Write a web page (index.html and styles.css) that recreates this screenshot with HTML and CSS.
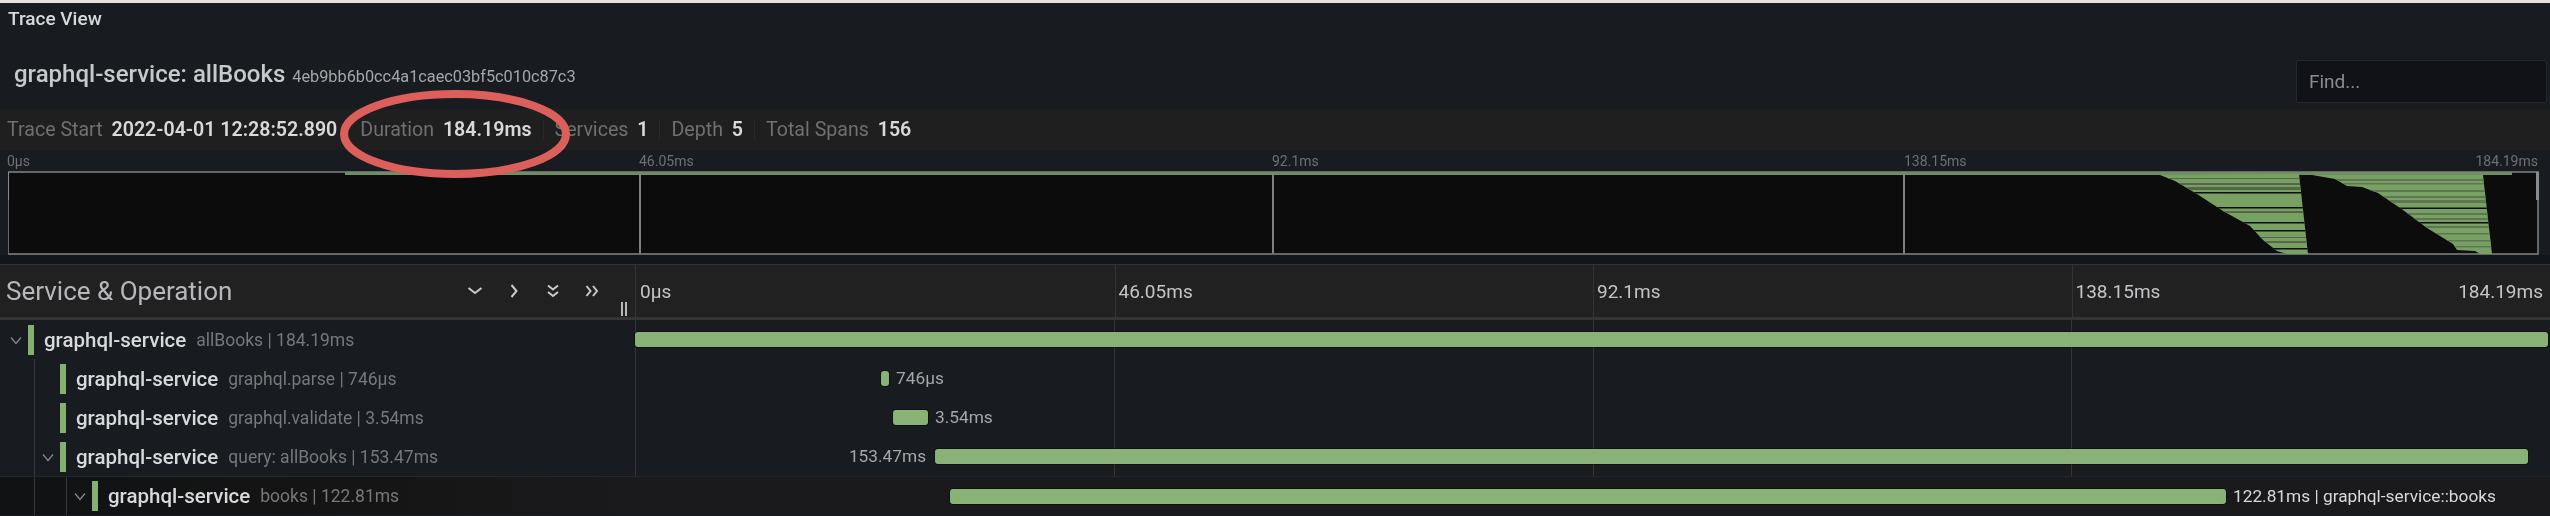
FILE: index.html
```html
<!DOCTYPE html>
<html lang="en">
<head>
<meta charset="utf-8">
<title>Trace View</title>
<link rel="stylesheet" href="styles.css">
</head>
<body>
<div class="app">
  <div class="strip"></div>
  <h2 class="view-title">Trace View</h2>
  <header class="trace-head">
    <h1 class="trace-name">graphql-service: allBooks <small class="trace-id">4eb9bb6b0cc4a1caec03bf5c010c87c3</small></h1>
    <div class="find">Find...</div>
  </header>
  <ul class="stats">
    <li class="stat"><span class="stat-key">Trace Start</span> <b class="stat-val">2022-04-01 12:28:52.890</b></li>
    <li class="stat"><span class="stat-key">Duration</span> <b class="stat-val">184.19ms</b></li>
    <li class="stat"><span class="stat-key">Services</span> <b class="stat-val">1</b></li>
    <li class="stat"><span class="stat-key">Depth</span> <b class="stat-val">5</b></li>
    <li class="stat"><span class="stat-key">Total Spans</span> <b class="stat-val">156</b></li>
  </ul>
  <div class="mini-labels">
    <span class="mini-label">0µs</span>
    <span class="mini-label">46.05ms</span>
    <span class="mini-label">92.1ms</span>
    <span class="mini-label">138.15ms</span>
    <span class="mini-label mini-label-end">184.19ms</span>
  </div>
  <div class="minimap">
    <svg class="mini-svg" width="2534" height="84" viewBox="8 171 2534 84">
      <defs>
        <clipPath id="ribbon-a">
          <polygon points="2160,175 2175,181 2197,194 2223,211 2250,226 2263,240 2277,251 2287,254 2308,254 2299,174"/>
        </clipPath>
        <clipPath id="ribbon-b">
          <polygon points="2312,175 2335,179 2347,186 2362,187 2378,193 2403,210 2427,228 2453,244 2457,250 2475,251 2480,254 2492,254 2483,175"/>
        </clipPath>
      </defs>
      <rect x="8" y="172" width="2531" height="82" fill="#0c0c0d"/>
      <path d="M640 172V254M1273 172V254M1904 172V254" stroke="#a7a7a7" stroke-width="1.5"/>
      <rect x="8" y="172" width="2530" height="82" fill="none" stroke="#6f7170" stroke-width="1.8"/>
      <rect x="345" y="172" width="2167" height="3" fill="#6f8f62"/>
      <g clip-path="url(#ribbon-a)">
        <rect x="2150" y="172" width="170" height="84" fill="#78a063"/>
        <g fill="#55664b">
          <rect x="2150" y="178" width="170" height="1"/>
          <rect x="2150" y="183" width="170" height="2"/>
          <rect x="2150" y="187" width="170" height="3"/>
          <rect x="2150" y="211" width="170" height="2"/>
          <rect x="2150" y="237" width="170" height="1"/>
          <rect x="2150" y="241" width="170" height="2"/>
        </g>
        <g fill="#0c0c0d">
          <rect x="2150" y="192" width="170" height="1.500"/>
          <rect x="2150" y="207" width="170" height="1.500"/>
          <rect x="2150" y="222" width="170" height="1.500"/>
          <rect x="2150" y="230" width="170" height="1.500"/>
          <rect x="2150" y="248" width="170" height="1.500"/>
        </g>
      </g>
      <g clip-path="url(#ribbon-b)">
        <rect x="2310" y="172" width="190" height="84" fill="#78a063"/>
        <g fill="#5f7655">
          <rect x="2310" y="179" width="190" height="2"/>
          <rect x="2310" y="183" width="190" height="1.500"/>
          <rect x="2310" y="190" width="190" height="2"/>
          <rect x="2310" y="196" width="190" height="2"/>
          <rect x="2310" y="200" width="190" height="3"/>
          <rect x="2310" y="213" width="190" height="2"/>
          <rect x="2310" y="218" width="190" height="2"/>
          <rect x="2310" y="226" width="190" height="2"/>
          <rect x="2310" y="233" width="190" height="1.500"/>
          <rect x="2310" y="240" width="190" height="1.500"/>
          <rect x="2310" y="246" width="190" height="1.500"/>
        </g>
        <g fill="#0c0c0d">
          <rect x="2310" y="207.500" width="190" height="1.500"/>
          <rect x="2310" y="222" width="190" height="1.500"/>
        </g>
      </g>
      <rect x="7" y="172" width="2" height="28" fill="#8a8a8a"/>
      <rect x="2536" y="172" width="3" height="28" fill="#8a8a8a"/>
    </svg>
  </div>
  <div class="gap"></div>
  <div class="table-head">
    <div class="left-head">
      <span class="col-title">Service &amp; Operation</span>
      <div class="head-icons">
        <svg class="head-icon" viewBox="0 0 16 16"><path d="M1.500 5l6.500 5 6.500-5"/></svg>
        <svg class="head-icon" viewBox="0 0 16 16"><path d="M5.500 2l5 6-5 6"/></svg>
        <svg class="head-icon" viewBox="0 0 16 16"><path d="M3 2.500l5 4 5-4M3 9l5 4 5-4"/></svg>
        <svg class="head-icon" viewBox="0 0 16 16"><path d="M2.500 3l4 5-4 5M9 3l4 5-4 5"/></svg>
      </div>
      <span class="drag-handle"></span>
    </div>
    <div class="right-head">
      <span class="tick-label">0µs</span>
      <span class="tick-label">46.05ms</span>
      <span class="tick-label">92.1ms</span>
      <span class="tick-label">138.15ms</span>
      <span class="tick-end">184.19ms</span>
    </div>
  </div>
  <div class="rows">
    <div class="row">
      <div class="row-name depth-0">
        <svg class="toggle" viewBox="0 0 16 16"><path d="M3 5.500l5 6 5-6"/></svg>
        <span class="swatch"></span><span class="service">graphql-service</span><span class="op">allBooks | 184.19ms</span>
      </div>
      <div class="row-track"><div class="bar bar-root" style="margin-left:0%;width:99.9%"></div></div>
    </div>
    <div class="row">
      <div class="row-name depth-1">
        <span class="toggle-empty"></span>
        <span class="swatch"></span><span class="service">graphql-service</span><span class="op">graphql.parse | 746µs</span>
      </div>
      <div class="row-track"><div class="bar" style="margin-left:12.85%;width:0.42%"><span class="bar-label">746µs</span></div></div>
    </div>
    <div class="row">
      <div class="row-name depth-1">
        <span class="toggle-empty"></span>
        <span class="swatch"></span><span class="service">graphql-service</span><span class="op">graphql.validate | 3.54ms</span>
      </div>
      <div class="row-track"><div class="bar" style="margin-left:13.47%;width:1.83%"><span class="bar-label">3.54ms</span></div></div>
    </div>
    <div class="row">
      <div class="row-name depth-1">
        <svg class="toggle" viewBox="0 0 16 16"><path d="M3 5.500l5 6 5-6"/></svg>
        <span class="swatch"></span><span class="service">graphql-service</span><span class="op">query: allBooks | 153.47ms</span>
      </div>
      <div class="row-track"><div class="bar" style="margin-left:15.67%;width:83.18%"><span class="bar-label bar-label-left">153.47ms</span></div></div>
    </div>
    <div class="row row-alt">
      <div class="row-name depth-2">
        <svg class="toggle" viewBox="0 0 16 16"><path d="M3 5.500l5 6 5-6"/></svg>
        <span class="swatch"></span><span class="service">graphql-service</span><span class="op">books | 122.81ms</span>
      </div>
      <div class="row-track"><div class="bar" style="margin-left:16.45%;width:66.63%"><span class="bar-label bar-label-bright">122.81ms | graphql-service::books</span></div></div>
    </div>
    <div class="grid-lines"><i class="grid-line"></i><i class="grid-line"></i><i class="grid-line"></i><i class="grid-line"></i></div>
  </div>
  <svg class="highlight" width="240" height="92" viewBox="0 0 240 92"><ellipse cx="120" cy="45" rx="111" ry="40" fill="none" stroke="#dc5f5c" stroke-width="8"/></svg>
</div>
</body>
</html>
```
FILE: styles.css
```css
* { box-sizing: border-box; }
html, body { margin: 0; padding: 0; background: #181b1f; }
.app {
  position: relative;
  width: 2550px;
  height: 516px;
  overflow: hidden;
  background: #181b1f;
  color: #d8d9da;
  font-family: "Roboto", "Liberation Sans", sans-serif;
  filter: blur(0.6px);
}
.strip { height: 3px; background: #e6e2dc; }
.view-title {
  margin: 0;
  height: 32px;
  padding: 8px 0 0 8px;
  font-size: 19px;
  line-height: 16px;
  font-weight: 500;
  color: #d8d9da;
}
.trace-head {
  height: 74px;
  display: flex;
  justify-content: space-between;
  padding: 0 3px 6px 14px;
  align-items: flex-end;
}
.trace-name {
  margin: 0 0 13px;
  font-size: 24px;
  line-height: 26px;
  font-weight: 500;
  color: #c8c9ca;
}
.trace-id { font-size: 16.300px; font-weight: 400; color: #a6a7a9; margin-left: 1px; }
.find {
  width: 251px;
  height: 43px;
  padding-left: 12px;
  background: #111217;
  border: 1px solid #26282d;
  border-radius: 2px;
  font-size: 19px;
  line-height: 41px;
  color: #8b8c8e;
}
.stats {
  list-style: none;
  margin: 0;
  height: 41px;
  padding: 0 0 0 7px;
  display: flex;
  align-items: center;
  background: #1f1f20;
  font-size: 19.600px;
}
.stat { padding-right: 11px; margin-right: 11px; white-space: nowrap; border-right: 1px solid #2a2a2b; line-height: 20px; }
.stat:last-child { border-right: 0; }
.stat-key { color: #6f7073; }
.stat-val { color: #d8d9da; font-weight: 600; margin-left: 4px; }
.mini-labels {
  height: 21px;
  display: grid;
  grid-template-columns: 632px 633px 632px 1fr auto;
  padding: 0 12px 0 7px;
  font-size: 14px;
  line-height: 22px;
  color: #6f7073;
}
.minimap { height: 84px; padding-left: 8px; }
.mini-svg { display: block; }
.gap { height: 10px; background: #12151a; border-bottom: 1px solid #333; margin-top: 0; }
.table-head {
  display: grid;
  grid-template-columns: 635px 1fr;
  height: 55px;
  background: #212122;
  border-bottom: 3px solid #333435;
}
.left-head {
  position: relative;
  display: flex;
  align-items: center;
  padding: 0 35px 2px 6px;
}
.col-title { font-size: 26px; color: #b7b8bb; }
.head-icons { margin-left: auto; display: flex; gap: 23px; }
.head-icon { width: 16px; height: 16px; fill: none; stroke: #c9cacd; stroke-width: 2; }
.drag-handle {
  position: absolute;
  right: 8px;
  bottom: 3px;
  width: 6px;
  height: 14px;
  border-left: 2px solid #b8b8ba;
  border-right: 2px solid #b8b8ba;
}
.right-head {
  position: relative;
  display: grid;
  grid-template-columns: repeat(4, 1fr);
  font-size: 19px;
  line-height: 54px;
  color: #c4c5c8;
  border-left: 1px solid #333435;
}
.tick-label { padding-left: 3px; border-left: 1px solid #333435; }
.tick-label:first-child { border-left: 0; padding-left: 4px; }
.tick-end { position: absolute; right: 7px; top: 0; }
.rows { position: relative; }
.row { display: grid; grid-template-columns: 635px 1fr; height: 39px; position: relative; z-index: 1; }
.row-alt { background: #1a1a1c; border-top: 1px solid #26272a; }
.row-alt .row-name { background: linear-gradient(90deg, #111213 0%, #151516 60%, #1a1a1c 100%); }
.row-name { position: relative; display: flex; align-items: center; white-space: nowrap; }
.depth-0 { padding-left: 8px; }
.depth-1 { padding-left: 40px; }
.depth-2 { padding-left: 72px; }
.depth-1::before, .depth-2::before {
  content: "";
  position: absolute;
  left: 34px;
  top: 0;
  bottom: 0;
  border-left: 1px solid #34363a;
}
.depth-2::after {
  content: "";
  position: absolute;
  left: 66px;
  top: 0;
  bottom: 0;
  border-left: 1px solid #34363a;
}
.toggle { width: 16px; height: 16px; margin-right: 4px; fill: none; stroke: #8a8b8e; stroke-width: 1.200; flex: none; }
.toggle-empty { width: 20px; flex: none; }
.swatch { width: 6px; height: 30px; margin-right: 10px; background: #84b16f; flex: none; }
.service { font-size: 20.500px; font-weight: 500; color: #d8d9da; margin-right: 10px; }
.op { font-size: 17.500px; color: #77787b; }
.row-track { display: flex; align-items: center; }
.bar { position: relative; height: 15px; background: #89b276; border-radius: 3px; flex: none; box-shadow: 0 0 0 1px rgba(0, 0, 0, 0.35); }
.bar-label { position: absolute; left: 100%; margin-left: 7px; top: -3px; font-size: 17.300px; line-height: 20px; white-space: nowrap; color: #a6a7a9; }
.bar-label-left { left: auto; right: 100%; margin: 0 9px 0 0; }
.bar-label-bright { color: #d8d9da; }
.grid-lines {
  position: absolute;
  left: 635px;
  right: 0;
  top: 0;
  bottom: 0;
  display: grid;
  grid-template-columns: repeat(4, 1fr);
}
.grid-line { border-left: 1px solid #323438; }
.highlight { position: absolute; left: 335px; top: 89px; z-index: 5; }
```
